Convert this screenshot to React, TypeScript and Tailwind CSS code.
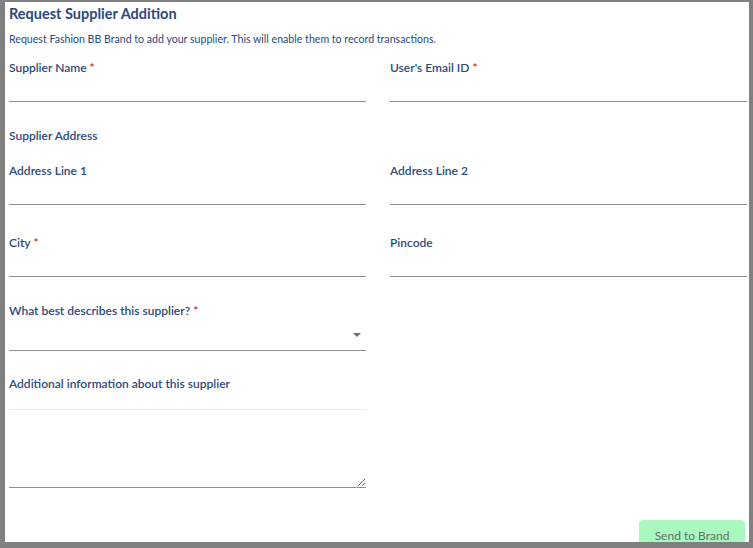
import { ChangeEvent, useState } from 'react'

/* ── Field pieces ──────────────────────────── */

function Label({ text, required }: { text: string; required?: boolean }) {
  return (
    <div className="h-4 text-[12px] leading-4 font-semibold text-[#2c4a7c] whitespace-nowrap">
      {text}
      {required && <span className="text-[#e3151a] ml-[3px]">*</span>}
    </div>
  )
}

function TextField({ label, required, value, onChange }: {
  label: string
  required?: boolean
  value: string
  onChange: (e: ChangeEvent<HTMLInputElement>) => void
}) {
  return (
    <div className="flex flex-col">
      <Label text={label} required={required} />
      <input value={value} onChange={onChange}
        className="h-[26px] border-0 border-b border-[#8f8f8f] outline-none text-[12px] text-[#2c4a7c] bg-transparent" />
    </div>
  )
}

/* ── Component ─────────────────────────────── */

export default function App() {
  const [form, setForm] = useState<Record<string, string>>({})
  const set = (k: string) => (e: ChangeEvent<HTMLInputElement>) =>
    setForm(prev => ({ ...prev, [k]: e.target.value }))

  return (
    <div className="w-[753px] h-[548px] overflow-hidden bg-white border-solid border-[#808080] border-t-2 border-l-[5px] border-r-4 border-b-[6px] pl-[4px] pr-[2px] pt-[2px] font-['Lato','Liberation_Sans',sans-serif]">
      <h1 className="text-[14.5px] leading-5 font-bold text-[#2c4a7c]">Request Supplier Addition</h1>
      <p className="mt-2 text-[10.6px] leading-[14px] text-[#2c4a7c]">
        Request Fashion BB Brand to add your supplier. This will enable them to record transactions.
      </p>

      <div className="mt-[14px] grid grid-cols-2 gap-x-6">
        <TextField label="Supplier Name" required value={form.name ?? ''} onChange={set('name')} />
        <TextField label="User's Email ID" required value={form.email ?? ''} onChange={set('email')} />
      </div>

      <div className="mt-[26px]">
        <Label text="Supplier Address" />
      </div>

      <div className="mt-[19px] grid grid-cols-2 gap-x-6">
        <TextField label="Address Line 1" value={form.addr1 ?? ''} onChange={set('addr1')} />
        <TextField label="Address Line 2" value={form.addr2 ?? ''} onChange={set('addr2')} />
      </div>

      <div className="mt-[30px] grid grid-cols-2 gap-x-6">
        <TextField label="City" required value={form.city ?? ''} onChange={set('city')} />
        <TextField label="Pincode" value={form.pincode ?? ''} onChange={set('pincode')} />
      </div>

      <div className="mt-[26px] grid grid-cols-2 gap-x-6">
        <div className="flex flex-col">
          <Label text="What best describes this supplier?" required />
          <div className="h-8 flex items-center justify-end pr-[5px] pt-[1px] border-b border-[#8f8f8f]">
            <svg width="8" height="4" viewBox="0 0 8 4"><path d="M0 0h8L4 4z" fill="#6b6b6b" /></svg>
          </div>
        </div>
      </div>

      <div className="mt-[25px] grid grid-cols-2 gap-x-6">
        <div className="flex flex-col">
          <Label text="Additional information about this supplier" />
          <textarea
            className="mt-[17px] h-[79px] border-0 border-t border-t-[#ececec] border-b border-b-[#8f8f8f] outline-none resize-y text-[12px] bg-transparent" />
        </div>
      </div>

      <div className="mt-8 flex justify-end">
        <button className="w-[106px] h-[30px] mr-[2px] pt-[2px] rounded-[4px] bg-[#a8f8c0] text-[12px] text-[#6b6b6b]">
          Send to Brand
        </button>
      </div>
    </div>
  )
}
